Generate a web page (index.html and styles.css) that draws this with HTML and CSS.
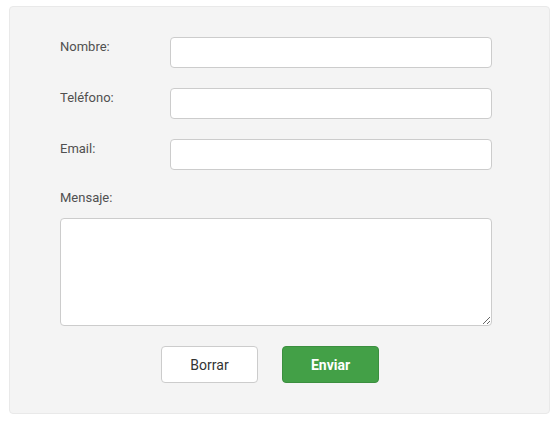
FILE: index.html
```html
<!DOCTYPE html>
<html lang="es">
<head>
<meta charset="utf-8">
<title>Contacto</title>
<link rel="stylesheet" href="styles.css">
</head>
<body>
<form class="panel">
  <div class="row">
    <label class="label" for="nombre">Nombre:</label>
    <input class="field" id="nombre" type="text">
  </div>
  <div class="row">
    <label class="label" for="tel">Teléfono:</label>
    <input class="field" id="tel" type="text">
  </div>
  <div class="row">
    <label class="label" for="email">Email:</label>
    <input class="field" id="email" type="text">
  </div>
  <div class="block">
    <label class="label msg-label" for="msg">Mensaje:</label>
    <textarea class="area" id="msg"></textarea>
  </div>
  <div class="actions">
    <button type="reset" class="btn btn-default">Borrar</button>
    <button type="button" class="btn btn-primary">Enviar</button>
  </div>
</form>
</body>
</html>
```
FILE: styles.css
```css
html, body {
  margin: 0;
  padding: 0;
  background: #ffffff;
}
body {
  padding: 6px 0 0 9px;
  font-family: Roboto, "Liberation Sans", sans-serif;
}
.panel {
  box-sizing: border-box;
  width: 541px;
  height: 408px;
  background: #f4f4f4;
  border: 1px solid #e9e9e9;
  border-radius: 4px;
  padding: 30px 0 0 50px;
}
.row {
  display: flex;
  align-items: flex-start;
  margin-bottom: 20px;
}
.label {
  display: block;
  width: 110px;
  font-size: 13px;
  line-height: 18px;
  color: #505050;
  padding-top: 1px;
}
.field {
  box-sizing: border-box;
  width: 322px;
  height: 31px;
  margin: 0;
  border: 1px solid #cccccc;
  border-radius: 4px;
  background: #ffffff;
  padding: 4px 8px;
  font: inherit;
}
.block {
  display: flex;
  flex-direction: column;
}
.msg-label {
  padding-top: 0;
  margin-top: -1px;
  margin-bottom: 11px;
}
.area {
  box-sizing: border-box;
  width: 432px;
  height: 108px;
  margin: 0;
  border: 1px solid #cccccc;
  border-radius: 4px;
  background: #ffffff;
  font: inherit;
  padding: 6px 8px;
  display: block;
}
.actions {
  display: flex;
  gap: 24px;
  padding-left: 101px;
  margin-top: 20px;
}
.btn {
  box-sizing: border-box;
  width: 97px;
  height: 37px;
  border-radius: 4px;
  font-family: Roboto, "Liberation Sans", sans-serif;
  font-size: 14px;
  cursor: pointer;
  margin: 0;
  padding: 0;
}
.btn-default {
  background: #ffffff;
  border: 1px solid #cccccc;
  color: #333333;
}
.btn-primary {
  background: #43a047;
  border: 1px solid #3b8f3f;
  color: #ffffff;
  font-weight: bold;
}
```
